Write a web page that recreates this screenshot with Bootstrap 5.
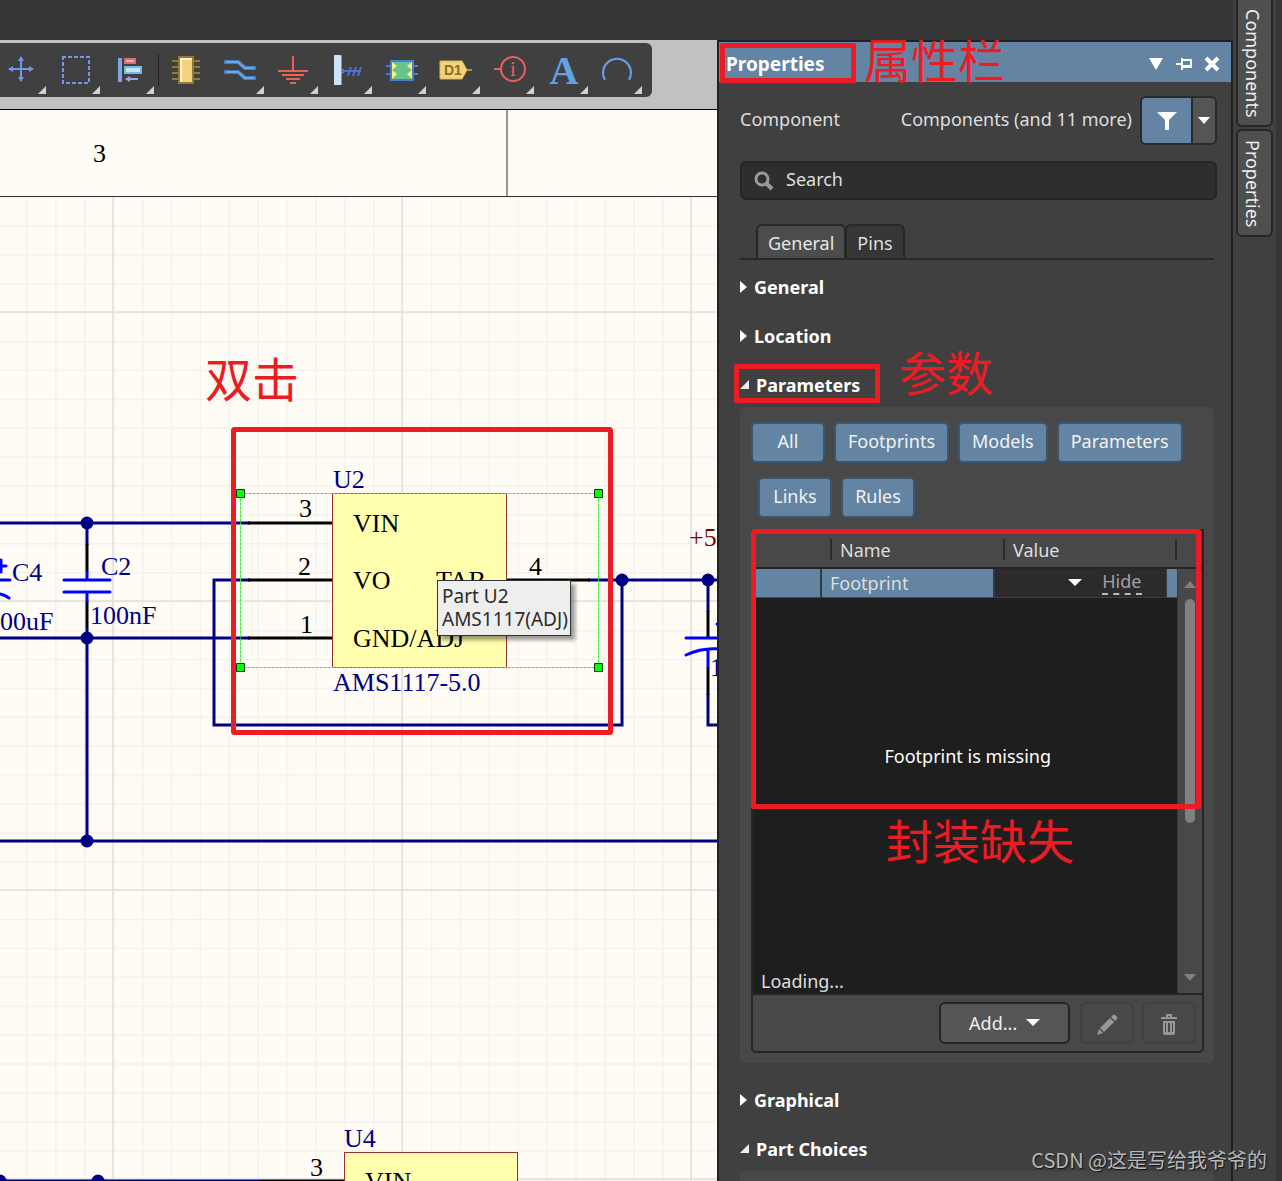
<!DOCTYPE html>
<html lang="zh-CN">
<head>
<meta charset="utf-8">
<meta name="viewport" content="width=device-width, initial-scale=1">
<title>Schematic editor – Properties</title>
<link href="https://cdn.jsdelivr.net/npm/bootstrap@5.3.0/dist/css/bootstrap.min.css" rel="stylesheet">
<style>
:root{--ink:#212121;--panel:#404040;--raised:#484848;--steel:#6384a3;--mark-red:#ed1c24}
body{background:#353535;color:#dedede;font-family:"Noto Sans","Noto Sans CJK SC",sans-serif;font-size:18px;line-height:24px}
button{color:inherit}
.workspace{min-width:0}
.titlebar{height:40px}
.tool-zone{background:#c1c1c1;height:70px;border-bottom:1px solid #000;padding-top:3px}
.tool-strip{background:#404040;height:54px;width:652px;border-radius:0 6px 6px 0;overflow:hidden}
.tool{border:0;background:none;padding:0;flex:0 0 54px;height:54px}
.tool:first-child{margin-left:-6px}
.tool.narrow{flex-basis:52px}
.tool svg{display:block}
.tool-rule{width:1px;height:32px;background:#222;margin:0 1px 0 2px}
.sheet{background:#fffcf6}
.sheet>svg{display:block}
.sheet text{font-family:"Liberation Serif",serif;font-size:26px}
.part-tip{left:437px;top:470px;background:#eee;color:#2b2b2b;border:1px solid #333;box-shadow:4px 4px 4px rgba(0,0,0,.4);padding:4px;font-size:19px;line-height:23px;width:134px;white-space:nowrap}
.note{color:var(--mark-red);font-family:"Noto Sans CJK SC",sans-serif;font-weight:400;font-size:47px;line-height:56px;white-space:nowrap}
.frame{border:5px solid var(--mark-red);border-radius:2px;pointer-events:none}
.inspector{flex:0 0 516px;background:var(--panel);border:2px solid var(--ink);border-bottom:0}
.inspector-head{background:var(--steel);height:40px;color:#fff;padding:0 5px 0 7px}
.inspector-head h1{font-size:19px;font-weight:700;line-height:28px;padding-top:3px}
.inspector-head button{border:0;background:none;padding:0;width:28px;height:30px}
.frame-title{left:1px;top:1px;width:136px;height:40px}
.note-title{left:145px;top:-12px}
.inspector-body{padding:14px 14px 0 21px}
.context-row span{padding-bottom:4px}
.filter-group{border:2px solid #2a2a2a;border-radius:6px;height:49px;overflow:hidden}
.filter-group button{border:0;padding:0 0 3px}
.filter-main{background:var(--steel);width:49px}
.filter-more{background:#555;width:24px;border-left:2px solid #2a2a2a!important}
.find{background:#2e2e2e;border:2px solid #252525;border-radius:6px;height:39px;margin-top:16px;padding-left:12px}
.find input,.find input:focus{background:none;border:0;box-shadow:none;color:#dedede;font-size:18px;line-height:24px;padding:0 0 4px 12px}
.find input::placeholder{color:#dedede;opacity:1}
.prop-tabs{margin:24px 3px 0 0;padding-left:16px;border-bottom:2px solid #282828;height:36px}
.prop-tabs .nav-link{border:2px solid #282828;border-bottom:0;border-radius:6px 6px 0 0;background:#363636;color:#dedede;padding:5px 10px 0;height:34px;line-height:24px;margin:0}
.prop-tabs .nav-item+.nav-item{margin-left:-1px}
.prop-tabs .nav-link.active{background:#4c4c4c;color:#e6e6e6;border-color:#282828}
.folds{padding-top:15px;gap:25px}
.folds.lower{padding-top:25px}
.fold{border:0;background:none;color:#fff;font-weight:700;padding:0;height:24px;gap:7px}
.fold.open{gap:6px}
.group-box{background:var(--raised);border-radius:6px;margin-right:3px}
.params-box{margin-top:10px;padding:15px 10px 10px 11px}
.chip-btn{background:var(--steel);border:2px solid #3b566f;border-radius:5px;color:#f2f2f2;font-size:18px;line-height:24px;height:41px;padding:5px 12px 8px}
.chip-btn.even{width:74px;padding-left:0;padding-right:0}
.chips{gap:9px}
.chips.second{margin:14px 0 0 7px}
.grid-box{border:2px solid #252525;border-radius:0 0 5px 5px;margin-top:11px}
.param-table{table-layout:fixed;width:100%;border-collapse:collapse;color:#dedede}
.param-table th{height:37px;padding:0;font-weight:400;border-bottom:2px solid #252525}
.param-table th span{display:block;margin-left:9px;padding-left:8px;border-left:2px solid #2a2a2a;height:21px;line-height:22px}
.param-table td{padding:0;height:29px}
.row-on td.lit{background:var(--steel);border-right:2px solid #35393f}
.row-on td.cell-value{background:#2b2b2b;border:1px solid #3a3f46}
.row-on select{appearance:none;background:none;border:0;width:52px;height:24px;padding:0}
.hide-link{color:#a0a0a0;text-decoration:none;border-bottom:2px dashed #bbb;line-height:23px;margin-left:20px}
.preview{background:#1e1e1e;height:395px}
.preview-msg{color:#fff;height:316px;padding-left:6px}
.param-table td.bar{vertical-align:top;border-left:1px solid #3a3a3a}
.bar-in{height:424px;padding:12px 0}
.bar-thumb{width:10px;height:224px;background:#808080;border-radius:5px;margin-top:11px}
.grid-foot{border-top:2px solid #252525;height:58px;gap:8px;padding-right:6px}
.add-btn{background:#555;border:2px solid #242424;border-radius:6px;color:#eee;width:131px;height:42px;line-height:24px;margin-right:2px}
.dim-btn{background:none;border:2px solid #404040;border-radius:6px;width:54px;height:42px;padding:0}
.frame-params{left:-6px;top:-9px;width:146px;height:39px}
.note-params{left:159px;top:-30px}
.frame-grid{left:-2px;top:-2px;width:450px;height:280px}
.note-missing{left:133px;top:280px}
.rail{flex:0 0 49px;background:var(--panel);border-right:6px solid #353535;padding-left:3px;gap:2px}
.rail-tab{writing-mode:vertical-rl;background:#4f4f4f;border:2px solid #262626;border-radius:6px;width:37px;color:#eee;font-size:18px;line-height:24px;text-align:left;padding:9px 6px 9px 3px}
.rail-tab:first-child{border-top:0;border-radius:0 0 6px 6px;height:127px}
.rail-tab:last-child{height:108px}
.stamp{right:15px;bottom:8px;font-family:"Noto Sans CJK SC",sans-serif;font-size:20px;line-height:26px;font-weight:400;color:#b8b8b8;text-shadow:1px 1px 1px #111;white-space:nowrap}
</style>
<script src="https://cdn.jsdelivr.net/npm/bootstrap@5.3.0/dist/js/bootstrap.bundle.min.js"></script>
</head>
<body class="vh-100 overflow-hidden d-flex position-relative">
<div class="workspace d-flex flex-column flex-grow-1">
  <header class="titlebar flex-shrink-0"></header>
  <div class="d-flex flex-grow-1 overflow-hidden">
    <main class="d-flex flex-column flex-grow-1 overflow-hidden">
      <div class="tool-zone flex-shrink-0">
        <div class="tool-strip d-flex align-items-center" role="toolbar" aria-label="Place tools">
          <button class="tool" aria-label="Move"><svg width="54" height="54"><g fill="none" stroke="#7396e8" stroke-width="2"><path d="M15 26H39M27 14V38"/></g><path fill="#7396e8" d="M14 26l5-3v6zM40 26l-5-3v6zM27 13l-3 5h6zM27 39l-3-5h6z"/><path fill="#d0d0d0" d="M44 51l8-8v8z"/></svg></button>
          <button class="tool" aria-label="Select"><svg width="54" height="54"><rect x="15" y="14" width="26" height="26" fill="none" stroke="#7396e8" stroke-width="2" stroke-dasharray="4 2" stroke-dashoffset="1"/><path fill="#d0d0d0" d="M44 51l8-8v8z"/></svg></button>
          <button class="tool" aria-label="Align"><svg width="54" height="54"><path fill="#7fa5e2" d="M16 15h4v24h-4z"/><path fill="#d96d6d" d="M22 15h12v6H22z"/><path fill="#f2adad" d="M24 17h8v2h-8z"/><path fill="#75b9dc" d="M22 23h18v8H22z"/><path fill="#c6e4f5" d="M24 25h14v4H24z"/><path fill="#8faae8" d="M23 36l5-3v2h8v2h-8v2z"/><path fill="#d0d0d0" d="M44 51l8-8v8z"/></svg></button>
          <div class="tool-rule"></div>
          <button class="tool narrow" aria-label="Part"><svg width="52" height="54"><path stroke="#94793a" stroke-width="2" d="M12 18h28M12 24h28M12 30h28M12 36h28"/><path fill="#94793a" d="M18 13h16v28H18z"/><path fill="#f7d27e" d="M20 15h12v24H20z"/><path fill="#fff0cf" d="M20 15h12v2H22v22h-2z"/></svg></button>
          <button class="tool" aria-label="Wire"><svg width="54" height="54"><g fill="none" stroke="#427fc0" stroke-width="4"><path d="M12 19h14l7 6h11M12 29h14l7 6h11"/></g><g fill="none" stroke="#6ba6e0" stroke-width="2"><path d="M14 19h12l7 6h9M14 29h12l7 6h9"/></g><path fill="#d0d0d0" d="M44 51l8-8v8z"/></svg></button>
          <button class="tool" aria-label="Power port"><svg width="54" height="54"><path stroke="#ea6155" stroke-width="2" d="M27 13v15M12 28h30M16 32h22M20 36h14M24 40h6"/><path fill="#d0d0d0" d="M44 51l8-8v8z"/></svg></button>
          <button class="tool" aria-label="Harness"><svg width="54" height="54"><path fill="#cfe3ff" d="M14 12h6q2 0 2 2v28h-8z"/><path fill="#6a99e2" d="M20 12q2 0 2 2v28h-1V13zM22 25l3 3-3 3z"/><path fill="none" stroke="#4c6fd0" stroke-width="2" d="M22 28h19M28 33l3-9M33 33l3-9M38 33l3-9"/><path fill="#d0d0d0" d="M44 51l8-8v8z"/></svg></button>
          <button class="tool" aria-label="Sheet symbol"><svg width="54" height="54"><path stroke="#4b7fd6" stroke-width="2" d="M12 23h32M12 31h32"/><path fill="#68c48e" stroke="#4b7fd6" stroke-width="2" d="M17 18h22v19H17z"/><path fill="#fff36a" d="M18 19l5 4-5 4 5 4-5 5zM38 19l-5 4 5 4-5 4 5 5z"/><path fill="#d0d0d0" d="M44 51l8-8v8z"/></svg></button>
          <button class="tool" aria-label="Port"><svg width="54" height="54"><path stroke="#b7923d" stroke-width="2" d="M38 27h6"/><path fill="#efd57c" stroke="#d6b65a" d="M12 18h22l5 9-5 9H12z"/><text x="16" y="32" font-family="Liberation Sans,sans-serif" font-weight="700" font-size="14" fill="#8f6b25">D1</text><path fill="#d0d0d0" d="M44 51l8-8v8z"/></svg></button>
          <button class="tool" aria-label="Directive"><svg width="54" height="54"><g fill="none" stroke="#e85f5f" stroke-width="2"><circle cx="31" cy="26" r="12"/><path d="M12 26h7"/></g><text x="31" y="33" text-anchor="middle" font-family="Liberation Serif,serif" font-size="21" fill="#e85f5f">i</text><path fill="#d0d0d0" d="M44 51l8-8v8z"/></svg></button>
          <button class="tool" aria-label="Text"><svg width="54" height="54"><text x="28" y="41" text-anchor="middle" font-family="Liberation Serif,serif" font-weight="700" font-size="40" fill="#64a0e6">A</text><path fill="#d0d0d0" d="M44 51l8-8v8z"/></svg></button>
          <button class="tool" aria-label="Arc"><svg width="54" height="54"><path fill="none" stroke="#64a0e6" stroke-width="2" d="M15 37a14 14 0 1 1 24 0"/><path fill="#d0d0d0" d="M44 51l8-8v8z"/></svg></button>
        </div>
      </div>
      <div class="sheet flex-grow-1 position-relative overflow-hidden">
        <svg width="100%" height="100%" aria-label="Schematic">
          <defs>
            <pattern id="minor" width="28.900" height="28.900" patternUnits="userSpaceOnUse" x="113" y="312"><path d="M0 .5H29M.5 0V29" stroke="#f1f0ec" stroke-width="1.500"/></pattern>
            <pattern id="major" width="289" height="289" patternUnits="userSpaceOnUse" x="112" y="311"><path d="M0 1H289M1 0V289" stroke="#e2e1dd" stroke-width="1.500"/></pattern>
          </defs>
          <g transform="translate(0 -110)">
            <rect y="197" width="100%" height="100%" fill="url(#minor)"/>
            <rect y="197" width="100%" height="100%" fill="url(#major)"/>
            <path d="M0 196.500H3000M507 110V196" stroke="#333" fill="none"/>
            <text x="93" y="162">3</text>
            <!-- supply wires -->
            <g fill="none" stroke="#000084" stroke-width="3">
              <path d="M0 523H250M0 638H250M87 523V545M87 628V841M0 841H3000M250 580H214V725H622V580M588 580H3000M708 580V612M708 694V725H3000M0 1181H260"/>
            </g>
            <g stroke="#000" stroke-width="3"><path d="M248 523H333M248 580H333M248 638H333M506 580H590M87 544V572M87 601V628M708 611V638M708 667V695M260 1181H344"/></g>
            <g fill="none" stroke="#00f" stroke-width="3" stroke-linecap="round">
              <path d="M64 580H110M64 592H110M87 572V580M87 592V601M0 580H10M0 566H6M1 560V572M0 594Q5 595 9 598M686 638H730M686 655Q708 645 730 651M708 650V667M717 624H724"/>
            </g>
            <g fill="#000084"><circle cx="87" cy="523" r="6.500"/><circle cx="87" cy="638" r="6.500"/><circle cx="87" cy="841" r="6.500"/><circle cx="622" cy="580" r="6.500"/><circle cx="708" cy="580" r="6.500"/><circle cx="0" cy="1181" r="6.500"/><circle cx="98" cy="1181" r="6.500"/></g>
            <g fill="#ffffae" stroke="#a03030"><rect x="332.500" y="493.500" width="174" height="174"/><rect x="344.500" y="1152.500" width="173" height="174"/></g>
            <g fill="#000084">
              <text x="12" y="581">C4</text><text x="101" y="575">C2</text><text x="-13" y="630">100uF</text><text x="90" y="624">100nF</text>
              <text x="333" y="488">U2</text><text x="333" y="691">AMS1117-5.0</text><text x="344" y="1147">U4</text><text x="710" y="676">10uF</text>
            </g>
            <text x="689" y="546" fill="#840000">+5V</text>
            <g fill="#000">
              <text x="299" y="517">3</text><text x="298" y="575">2</text><text x="300" y="633">1</text><text x="529" y="575">4</text><text x="310" y="1176">3</text>
              <text x="353" y="532">VIN</text><text x="353" y="589">VO</text><text x="436" y="589">TAB</text><text x="353" y="647">GND/ADJ</text><text x="365" y="1190">VIN</text>
            </g>
            <!-- selection handles -->
            <rect x="240.500" y="493.500" width="358" height="174" fill="none" stroke="#2bf52b" stroke-dasharray="3 1"/>
            <g fill="#0f0" stroke="#053b05"><path d="M236.500 489.500h8v8h-8zM594.500 489.500h8v8h-8zM236.500 663.500h8v8h-8zM594.500 663.500h8v8h-8z"/></g>
            <rect x="233.500" y="429.500" width="377" height="303" rx="1" fill="none" stroke="#ed1c24" stroke-width="5"/>
            <text x="205" y="397" style="font:400 47px 'Noto Sans CJK SC',sans-serif" fill="#ed1c24">双击</text>
          </g>
        </svg>
        <div class="part-tip position-absolute" role="tooltip">Part U2<br>AMS1117(ADJ)</div>
      </div>
    </main>
    <aside class="inspector" aria-label="Properties">
      <div class="inspector-head d-flex align-items-center position-relative">
        <h1 class="m-0 me-auto">Properties</h1>
        <button aria-label="Menu"><svg width="14" height="14"><path fill="#fff" d="M0 1h14L7 13z"/></svg></button>
        <button aria-label="Pin"><svg width="18" height="16"><path fill="none" stroke="#fff" stroke-width="2" d="M1 8h6M7 2v12M7 4h9v7"/><path fill="#fff" d="M7 9h10v3H7z"/></svg></button>
        <button aria-label="Close"><svg width="16" height="16"><path stroke="#fff" stroke-width="4" d="M2 2l12 12M14 2L2 14"/></svg></button>
        <div class="frame frame-title position-absolute"></div>
        <div class="note note-title position-absolute">属性栏</div>
      </div>
      <div class="inspector-body">
        <div class="context-row d-flex align-items-center">
          <span class="me-auto">Component</span><span class="me-2">Components (and 11 more)</span>
          <div class="filter-group d-flex">
            <button class="filter-main" aria-label="Filter"><svg width="20" height="20"><path fill="#fff" d="M0 1h20l-8 8v10H8V9z"/></svg></button>
            <button class="filter-more" aria-label="Filter options"><svg width="12" height="8"><path fill="#fff" d="M0 0h12L6 7z"/></svg></button>
          </div>
        </div>
        <div class="find d-flex align-items-center">
          <svg class="flex-shrink-0" width="20" height="20"><g fill="none" stroke="#9a9a9a"><circle cx="8" cy="8" r="6" stroke-width="3"/><path stroke-width="4" d="M12 12l6 6"/></g></svg>
          <input class="form-control" type="text" placeholder="Search" aria-label="Search">
        </div>
        <ul class="nav prop-tabs">
          <li class="nav-item"><a class="nav-link active" href="#">General</a></li>
          <li class="nav-item"><a class="nav-link" href="#">Pins</a></li>
        </ul>
        <div class="folds d-flex flex-column align-items-start">
          <button class="fold d-flex align-items-center"><svg width="7" height="12"><path fill="#fff" d="M0 0l7 6-7 6z"/></svg>General</button>
          <button class="fold d-flex align-items-center"><svg width="7" height="12"><path fill="#fff" d="M0 0l7 6-7 6z"/></svg>Location</button>
          <div class="position-relative">
            <button class="fold open d-flex align-items-center"><svg width="10" height="10"><path fill="#eee" d="M0 9l9-9v9z"/></svg>Parameters</button>
            <div class="frame frame-params position-absolute"></div>
            <div class="note note-params position-absolute">参数</div>
          </div>
        </div>
        <section class="group-box params-box">
          <div class="chips d-flex">
            <button class="chip-btn even">All</button><button class="chip-btn">Footprints</button><button class="chip-btn">Models</button><button class="chip-btn">Parameters</button>
          </div>
          <div class="chips second d-flex">
            <button class="chip-btn even">Links</button><button class="chip-btn even">Rules</button>
          </div>
          <div class="grid-box position-relative">
            <table class="param-table">
              <colgroup><col style="width:68px"><col style="width:173px"><col style="width:172px"><col style="width:11px"><col></colgroup>
              <thead><tr><th></th><th scope="col"><span>Name</span></th><th scope="col"><span>Value</span></th><th><span></span></th><th></th></tr></thead>
              <tbody>
                <tr class="row-on"><td class="lit"></td><td class="lit ps-2">Footprint</td>
                  <td class="cell-value"><div class="d-flex align-items-center justify-content-end pe-4">
                    <select aria-label="Footprint value"><option></option></select><svg width="14" height="8"><path fill="#fff" d="M0 0h14L7 7z"/></svg><a class="hide-link" href="#">Hide</a></div></td>
                  <td class="lit border-0"></td>
                  <td class="bar" rowspan="2"><div class="bar-in d-flex flex-column align-items-center"><svg width="12" height="7"><path fill="#808080" d="M0 7l6-7 6 7z"/></svg><div class="bar-thumb"></div><svg class="mt-auto" width="12" height="7"><path fill="#808080" d="M0 0h12L6 7z"/></svg></div></td></tr>
                <tr><td colspan="4"><div class="preview d-flex flex-column justify-content-between overflow-hidden"><div class="preview-msg d-flex align-items-center justify-content-center">Footprint is missing</div><div class="ps-1 ms-1">Loading...</div></div></td></tr>
              </tbody>
            </table>
            <div class="grid-foot d-flex align-items-center justify-content-end">
              <button class="add-btn">Add... <svg class="ms-1 mb-1" width="14" height="8"><path fill="#fff" d="M0 0h14L7 7z"/></svg></button>
              <button class="dim-btn" aria-label="Edit"><svg width="22" height="22"><path fill="#979797" d="M1 21l2-6 4 4zM4 14L14 4l4 4L8 18zM15 3l2-2q2-1 3 1 2 1 1 3l-2 2z"/></svg></button>
              <button class="dim-btn" aria-label="Delete"><svg width="18" height="22"><path fill="#979797" fill-rule="evenodd" d="M6 3V0h6v3h5v2H1V3zM8 3h2V2H8zM3 7h12v12q0 2-2 2H5q-2 0-2-2zM5 9v9h1V9zM8 9v9h2V9zM12 9v9h1V9z"/></svg></button>
            </div>
            <div class="frame frame-grid position-absolute"></div>
            <div class="note note-missing position-absolute">封装缺失</div>
          </div>
        </section>
        <div class="folds lower d-flex flex-column align-items-start">
          <button class="fold d-flex align-items-center"><svg width="7" height="12"><path fill="#fff" d="M0 0l7 6-7 6z"/></svg>Graphical</button>
          <button class="fold open d-flex align-items-center"><svg width="10" height="10"><path fill="#eee" d="M0 9l9-9v9z"/></svg>Part Choices</button>
        </div>
        <section class="group-box params-box"></section>
      </div>
    </aside>
  </div>
</div>
<nav class="rail d-flex flex-column" aria-label="Panels">
  <button class="rail-tab">Components</button>
  <button class="rail-tab">Properties</button>
</nav>
<div class="stamp position-absolute">CSDN @这是写给我爷爷的</div>
</body>
</html>
